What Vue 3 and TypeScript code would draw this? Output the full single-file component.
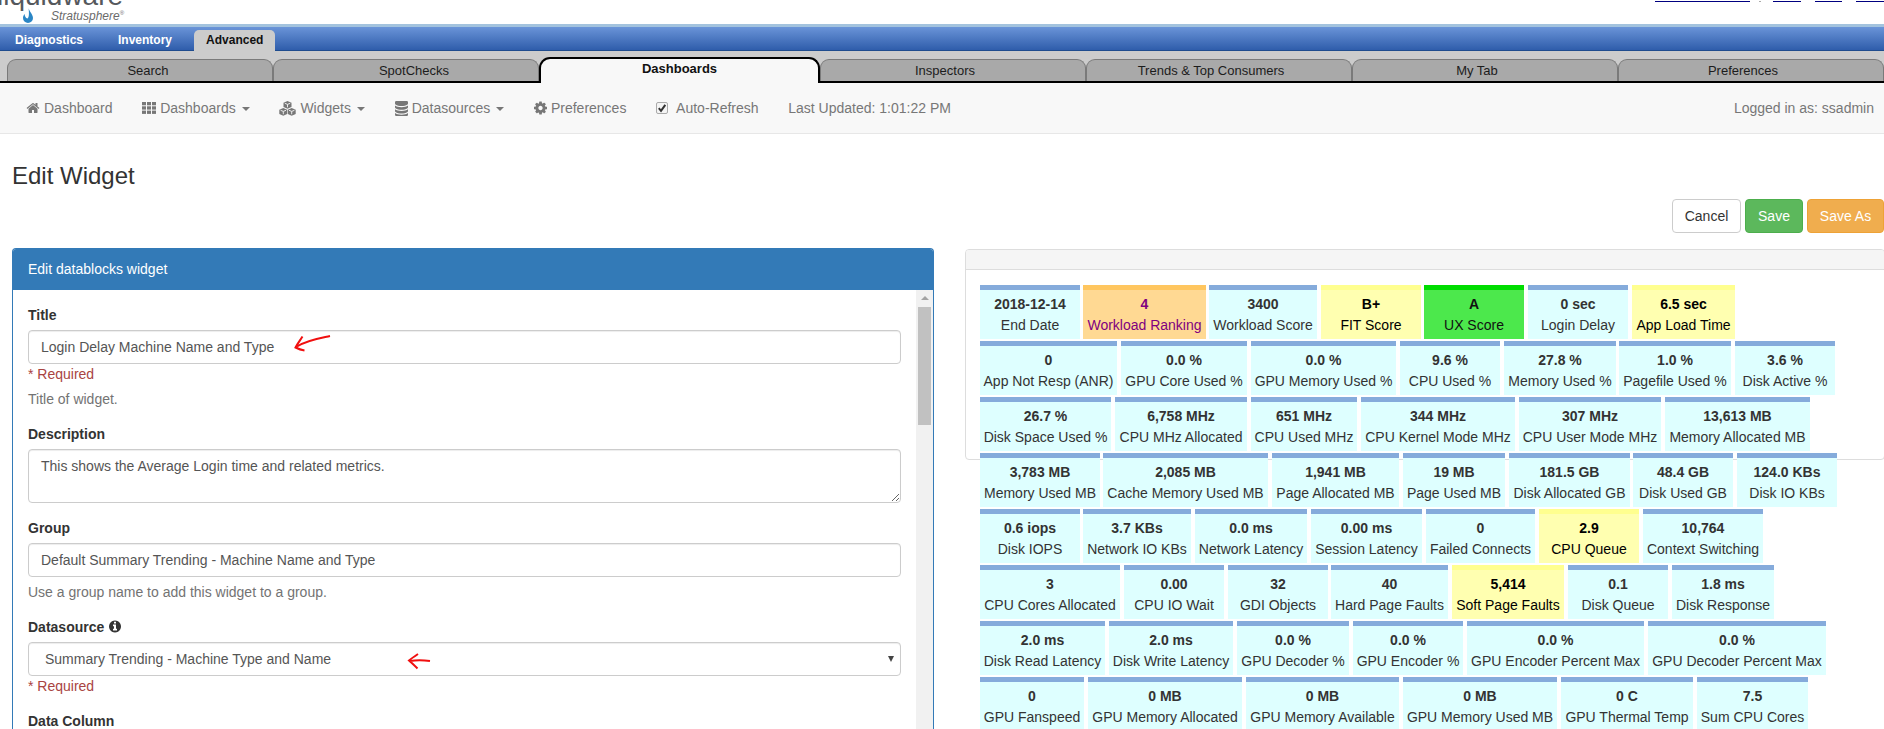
<script setup lang="ts">
type Kind = 'normal' | 'orange' | 'yellow' | 'green'
type Raw = [string, string, number, number, Kind?]

const raw: Raw[][] = [
  [
    ['2018-12-14', 'End Date', 980, 1080],
    ['4', 'Workload Ranking', 1083, 1206, 'orange'],
    ['3400', 'Workload Score', 1209, 1317],
    ['B+', 'FIT Score', 1321, 1421, 'yellow'],
    ['A', 'UX Score', 1424, 1524, 'green'],
    ['0 sec', 'Login Delay', 1528, 1628],
    ['6.5 sec', 'App Load Time', 1632, 1735, 'yellow'],
  ],
  [
    ['0', 'App Not Resp (ANR)', 980, 1117],
    ['0.0 %', 'GPU Core Used %', 1121, 1247],
    ['0.0 %', 'GPU Memory Used %', 1251, 1396],
    ['9.6 %', 'CPU Used %', 1400, 1500],
    ['27.8 %', 'Memory Used %', 1504, 1616],
    ['1.0 %', 'Pagefile Used %', 1619, 1731],
    ['3.6 %', 'Disk Active %', 1735, 1835],
  ],
  [
    ['26.7 %', 'Disk Space Used %', 980, 1111],
    ['6,758 MHz', 'CPU MHz Allocated', 1115, 1247],
    ['651 MHz', 'CPU Used MHz', 1251, 1357],
    ['344 MHz', 'CPU Kernel Mode MHz', 1361, 1515],
    ['307 MHz', 'CPU User Mode MHz', 1519, 1661],
    ['13,613 MB', 'Memory Allocated MB', 1665, 1810],
  ],
  [
    ['3,783 MB', 'Memory Used MB', 980, 1100],
    ['2,085 MB', 'Cache Memory Used MB', 1103, 1268],
    ['1,941 MB', 'Page Allocated MB', 1272, 1399],
    ['19 MB', 'Page Used MB', 1403, 1505],
    ['181.5 GB', 'Disk Allocated GB', 1509, 1630],
    ['48.4 GB', 'Disk Used GB', 1633, 1733],
    ['124.0 KBs', 'Disk IO KBs', 1737, 1837],
  ],
  [
    ['0.6 iops', 'Disk IOPS', 980, 1080],
    ['3.7 KBs', 'Network IO KBs', 1083, 1191],
    ['0.0 ms', 'Network Latency', 1195, 1307],
    ['0.00 ms', 'Session Latency', 1311, 1422],
    ['0', 'Failed Connects', 1426, 1535],
    ['2.9', 'CPU Queue', 1539, 1639, 'yellow'],
    ['10,764', 'Context Switching', 1643, 1763],
  ],
  [
    ['3', 'CPU Cores Allocated', 980, 1120],
    ['0.00', 'CPU IO Wait', 1124, 1224],
    ['32', 'GDI Objects', 1228, 1328],
    ['40', 'Hard Page Faults', 1331, 1448],
    ['5,414', 'Soft Page Faults', 1452, 1564, 'yellow'],
    ['0.1', 'Disk Queue', 1568, 1668],
    ['1.8 ms', 'Disk Response', 1672, 1774],
  ],
  [
    ['2.0 ms', 'Disk Read Latency', 980, 1105],
    ['2.0 ms', 'Disk Write Latency', 1109, 1233],
    ['0.0 %', 'GPU Decoder %', 1237, 1349],
    ['0.0 %', 'GPU Encoder %', 1353, 1463],
    ['0.0 %', 'GPU Encoder Percent Max', 1467, 1644],
    ['0.0 %', 'GPU Decoder Percent Max', 1648, 1826],
  ],
  [
    ['0', 'GPU Fanspeed', 980, 1084],
    ['0 MB', 'GPU Memory Allocated', 1088, 1242],
    ['0 MB', 'GPU Memory Available', 1246, 1399],
    ['0 MB', 'GPU Memory Used MB', 1403, 1557],
    ['0 C', 'GPU Thermal Temp', 1561, 1693],
    ['7.5', 'Sum CPU Cores', 1697, 1808],
  ],
]

const rows = raw.map((row) => {
  let prev = 980
  return row.map(([value, label, start, end, kind]) => {
    const tile = {
      value,
      label,
      kind: kind ?? 'normal',
      box: { width: `${end - start}px`, marginLeft: `${start - prev}px` },
    }
    prev = end
    return tile
  })
})

const mainTabs = ['Search', 'SpotChecks', 'Dashboards', 'Inspectors', 'Trends & Top Consumers', 'My Tab', 'Preferences']
const activeTab = 2
</script>

<template>
  <div class="page">
    <header class="top">
      <div class="logo">
        <div class="word">liquidware</div>
        <svg class="drop" width="14" height="18" viewBox="0 0 14 18">
          <path d="M7.500 1C7.500 5 12 8 12 12a5 5 0 0 1-10 0c0-2 .8-3 1.600-4 .2 2 .8 4 3 4.600C8.500 11 8 6 7.500 1z" fill="#2b86c5" />
        </svg>
        <div class="brand">Stratusphere<sup>®</sup></div>
      </div>
      <div class="links">
        <span class="ul ul-a"></span>
        <span class="tick"></span>
        <span class="ul ul-b"></span>
        <span class="ul ul-c"></span>
        <span class="ul ul-d"></span>
      </div>
    </header>

    <nav class="blue">
      <span class="blue-item">Diagnostics</span>
      <span class="blue-item">Inventory</span>
      <span class="blue-item on">Advanced</span>
    </nav>

    <div class="tabs">
      <div
        v-for="(t, i) in mainTabs"
        :key="t"
        class="tab"
        :class="{ active: i === activeTab, before: i < activeTab, after: i > activeTab }"
      >{{ t }}</div>
    </div>

    <div class="toolbar">
      <span class="tool">
        <svg class="ico" width="14" height="14" viewBox="0 0 1792 1792"><path d="M1472 992v480q0 26-19 45t-45 19h-384v-384h-256v384h-384q-26 0-45-19t-19-45v-480q0-1 .5-3t.5-3l575-474 575 474q1 2 1 6zm223-69l-62 74q-8 9-21 11h-3q-13 0-21-7l-692-577-692 577q-12 8-24 7-13-2-21-11l-62-74q-8-10-7-23.500t11-21.500l719-599q32-26 76-26t76 26l244 204v-195q0-14 9-23t23-9h192q14 0 23 9t9 23v408l219 182q10 8 11 21.500t-7 23.500z" /></svg>
        Dashboard
      </span>
      <span class="tool">
        <svg class="ico" width="14" height="12" viewBox="0 0 14 12">
          <rect x="0" y="0" width="4" height="3.300" /><rect x="5" y="0" width="4" height="3.300" /><rect x="10" y="0" width="4" height="3.300" />
          <rect x="0" y="4.300" width="4" height="3.300" /><rect x="5" y="4.300" width="4" height="3.300" /><rect x="10" y="4.300" width="4" height="3.300" />
          <rect x="0" y="8.600" width="4" height="3.300" /><rect x="5" y="8.600" width="4" height="3.300" /><rect x="10" y="8.600" width="4" height="3.300" />
        </svg>
        Dashboards<i class="caret"></i>
      </span>
      <span class="tool">
        <svg class="ico" width="17" height="15" viewBox="0 0 17 15">
          <path d="M8.500 0 12.500 1.700V6L8.500 7.700 4.500 6V1.700z" />
          <path d="M4.300 7 8.200 8.700V13L4.300 14.800.3 13V8.700z" />
          <path d="M12.700 7 16.700 8.700V13L12.700 14.800 8.800 13V8.700z" />
          <path d="M5.800 2.300 8.500 3.400 11.200 2.300M8.500 3.400V6.300M1.600 9.300 4.300 10.400 7 9.300M4.300 10.400V13.300M10 9.300 12.700 10.400 15.400 9.300M12.700 10.400V13.300" fill="none" stroke="#f8f8f8" stroke-width=".9" />
        </svg>
        Widgets<i class="caret"></i>
      </span>
      <span class="tool">
        <svg class="ico" width="13" height="15" viewBox="128 128 1536 1536" preserveAspectRatio="none"><path d="M896 768q237 0 443-43t325-127v170q0 69-103 128t-280 93.500-385 34.500-385-34.500-280-93.500-103-128v-170q119 84 325 127t443 43zm0 768q237 0 443-43t325-127v170q0 69-103 128t-280 93.500-385 34.500-385-34.500-280-93.500-103-128v-170q119 84 325 127t443 43zm0-384q237 0 443-43t325-127v170q0 69-103 128t-280 93.500-385 34.500-385-34.500-280-93.500-103-128v-170q119 84 325 127t443 43zm0-1152q208 0 385 34.500t280 93.500 103 128v128q0 69-103 128t-280 93.500-385 34.500-385-34.500-280-93.500-103-128v-128q0-69 103-128t280-93.500 385-34.500z" /></svg>
        Datasources<i class="caret"></i>
      </span>
      <span class="tool">
        <svg class="ico" width="13" height="14" viewBox="128 128 1536 1536"><path d="M1152 896q0-106-75-181t-181-75-181 75-75 181 75 181 181 75 181-75 75-181zm512-109v222q0 12-8 23t-20 13l-185 28q-19 54-39 91 35 50 107 138 10 12 10 25t-9 23q-27 37-99 108t-94 71q-12 0-26-9l-138-108q-44 23-91 38-16 136-29 186-7 28-36 28h-222q-14 0-24.500-8.500t-11.500-21.500l-28-184q-49-16-90-37l-141 107q-10 9-25 9-14 0-25-11-126-114-165-168-7-10-7-23 0-12 8-23 15-21 51-66.500t54-70.500q-27-50-41-99l-183-27q-13-2-21-12.500t-8-23.500v-222q0-12 8-23t19-13l186-28q14-46 39-92-40-57-107-138-10-12-10-24 0-10 9-23 26-36 98.500-107.500t94.500-71.500q13 0 26 10l138 107q44-23 91-38 16-136 29-186 7-28 36-28h222q14 0 24.500 8.500t11.500 21.500l28 184q49 16 90 37l142-107q9-9 24-9 13 0 25 10 129 119 165 170 7 8 7 22 0 12-8 23-15 21-51 66.500t-54 70.500q26 50 41 98l183 28q13 2 21 12.500t8 23.500z" /></svg>
        Preferences
      </span>
      <span class="tool">
        <span class="box">
          <svg width="10" height="10" viewBox="0 0 10 10"><path d="M1.800 5.200 4 7.800 8.300 1.800" fill="none" stroke="#333" stroke-width="2" /></svg>
        </span>
        Auto-Refresh
      </span>
      <span class="tool">Last Updated: 1:01:22 PM</span>
      <span class="who">Logged in as: ssadmin</span>
    </div>

    <main class="main">
      <h3 class="title">Edit Widget</h3>
      <div class="actions">
        <button class="btn cancel" type="button">Cancel</button>
        <button class="btn save" type="button">Save</button>
        <button class="btn saveas" type="button">Save As</button>
      </div>

      <div class="columns">
        <section class="edit">
          <div class="edit-head">Edit datablocks widget</div>
          <div class="edit-body">
            <form class="form">
              <div class="group">
                <label class="label">Title</label>
                <div class="annotated">
                  <input class="control" type="text" readonly value="Login Delay Machine Name and Type" />
                  <svg class="arrow arrow-one" width="40" height="18" viewBox="0 0 40 18"><path d="M37 1C28 3 14 5 4 11.500M9.500 1.500C7 5.500 4.500 8.500 2.500 12.500 5.500 14 8.500 15 11.500 15.500" fill="none" stroke="#f00f0f" stroke-width="2" /></svg>
                </div>
                <div class="req">* Required</div>
                <div class="help">Title of widget.</div>
              </div>
              <div class="group">
                <label class="label">Description</label>
                <textarea class="control area" readonly>This shows the Average Login time and related metrics.</textarea>
              </div>
              <div class="group">
                <label class="label">Group</label>
                <input class="control" type="text" readonly value="Default Summary Trending - Machine Name and Type" />
                <div class="help">Use a group name to add this widget to a group.</div>
              </div>
              <div class="group">
                <label class="label">Datasource
                  <svg class="info" width="12" height="13" viewBox="128 128 1536 1536"><path d="M1152 1376v-160q0-14-9-23t-23-9h-96v-512q0-14-9-23t-23-9h-320q-14 0-23 9t-9 23v160q0 14 9 23t23 9h96v320h-96q-14 0-23 9t-9 23v160q0 14 9 23t23 9h448q14 0 23-9t9-23zm-128-896v-160q0-14-9-23t-23-9h-192q-14 0-23 9t-9 23v160q0 14 9 23t23 9h192q14 0 23-9t9-23zm640 416q0 209-103 385.500t-279.500 279.500-385.500 103-385.500-103-279.500-279.500-103-385.500 103-385.500 279.500-279.500 385.500-103 385.500 103 279.500 279.500 103 385.500z" /></svg>
                </label>
                <div class="annotated select-wrap">
                  <select class="control pick">
                    <option>Summary Trending - Machine Type and Name</option>
                  </select>
                  <svg class="arrow arrow-two" width="24" height="18" viewBox="0 0 24 18"><path d="M23 9C16 8 9 8 3 9M11 2C8 4 5 6 2 8.500 5 11 8 14 10.500 16.500" fill="none" stroke="#f00f0f" stroke-width="2" /></svg>
                </div>
                <div class="req">* Required</div>
              </div>
              <div class="group">
                <label class="label">Data Column</label>
              </div>
            </form>
            <div class="track">
              <i class="up"></i>
              <div class="thumb"></div>
            </div>
          </div>
        </section>

        <section class="preview">
          <div class="preview-head"></div>
          <div class="preview-body">
            <div v-for="(row, r) in rows" :key="r" class="tile-row">
              <div v-for="t in row" :key="t.label" class="tile" :class="t.kind" :style="t.box">
                <div class="val">{{ t.value }}</div>
                <div class="lab">{{ t.label }}</div>
              </div>
            </div>
          </div>
        </section>
      </div>
    </main>
  </div>
</template>

<style>
html,
body {
  margin: 0;
  overflow: hidden;
  background: #fff;
}
</style>

<style scoped>
.page {
  width: 1884px;
  height: 729px;
  overflow: hidden;
  font-family: "Liberation Sans", Arial, sans-serif;
  font-size: 14px;
  line-height: 20px;
  color: #333;
  background: #fff;
}

/* cropped logo strip */
.top {
  height: 24px;
  overflow: hidden;
  position: relative;
  display: flex;
  justify-content: flex-end;
}
.logo {
  position: absolute;
  left: 0;
  top: 0;
  width: 130px;
  height: 24px;
}
.word {
  margin: -20px 0 0 -3px;
  font-size: 28px;
  line-height: 32px;
  color: #55585c;
  white-space: nowrap;
}
.drop {
  position: absolute;
  left: 21px;
  top: 6px;
}
.brand {
  position: absolute;
  left: 51px;
  top: 8px;
  font-size: 12px;
  line-height: 16px;
  font-style: italic;
  color: #6a6a6a;
  white-space: nowrap;
}
.brand sup {
  font-size: 6px;
  line-height: 0;
  font-style: normal;
}
.links {
  display: flex;
  align-items: flex-start;
  padding-top: 1px;
}
.ul {
  display: block;
  height: 1px;
  background: #000080;
}
.ul-a { width: 95px; }
.ul-b { width: 28px; margin-left: 12px; }
.ul-c { width: 27px; margin-left: 14px; }
.ul-d { width: 28px; margin-left: 14px; }
.tick {
  display: block;
  width: 2px;
  height: 1px;
  margin-left: 9px;
  background: #aaa;
}

/* blue product nav */
.blue {
  height: 27px;
  box-sizing: border-box;
  border-top: 3px solid #a3c3de;
  border-bottom: 1px solid #1f4c8e;
  background: linear-gradient(#6a94d8, #2f5dab);
  display: flex;
  align-items: flex-end;
  gap: 11px;
  padding-left: 3px;
}
.blue-item {
  height: 21px;
  margin-bottom: -1px;
  padding: 0 12px;
  font-size: 12px;
  font-weight: bold;
  line-height: 20px;
  color: #fff;
}
.blue-item.on {
  margin-left: -1px;
  background: #ccc;
  border-radius: 5px 5px 0 0;
  color: #111;
}

/* section tabs */
.tabs {
  height: 32px;
  box-sizing: border-box;
  padding: 8px 0 0 7px;
  background: #ccc;
  border-bottom: 2px solid #000;
  display: flex;
}
.tab {
  flex: 1 1 0;
  height: 22px;
  box-sizing: border-box;
  border: 1px solid #7a7a7a;
  border-bottom: 0;
  border-radius: 9px 9px 0 0;
  background: #a9a9a9;
  font-size: 13px;
  line-height: 21px;
  text-align: center;
  color: #1c1c1c;
}
.tab.before {
  padding-left: 16px;
}
.tab.after {
  padding-right: 16px;
}
.tab.active {
  flex: 0 0 281px;
  height: 26px;
  margin-top: -2px;
  border: 2px solid #000;
  border-bottom: 0;
  border-radius: 11px 11px 0 0;
  background: #f8f8f8;
  font-weight: bold;
  line-height: 20px;
  color: #111;
}

/* toolbar */
.toolbar {
  height: 51px;
  box-sizing: border-box;
  padding: 0 10px 0 26px;
  background: #f8f8f8;
  border-bottom: 1px solid #e7e7e7;
  display: flex;
  align-items: center;
  gap: 29.7px;
  color: #777;
}
.tool {
  display: flex;
  align-items: center;
  white-space: nowrap;
}
.ico {
  margin-right: 4px;
  fill: #777;
}
.caret {
  width: 0;
  height: 0;
  margin-left: 6px;
  margin-top: 2px;
  border-top: 4px solid #777;
  border-left: 4px solid transparent;
  border-right: 4px solid transparent;
}
.box {
  width: 12px;
  height: 12px;
  margin-right: 8px;
  box-sizing: border-box;
  border: 1px solid #aaa;
  border-radius: 2px;
  background: #f4f4f4;
  display: flex;
  align-items: center;
  justify-content: center;
}
.who {
  margin-left: auto;
}

/* content */
.main {
  padding-left: 12px;
}
.title {
  margin: 0;
  padding-top: 29px;
  font-size: 24px;
  font-weight: normal;
  line-height: 26px;
  color: #333;
}
.actions {
  margin-top: 10px;
  display: flex;
  justify-content: flex-end;
  gap: 4px;
}
.btn {
  height: 34px;
  box-sizing: border-box;
  padding: 0;
  border: 1px solid transparent;
  border-radius: 4px;
  font-family: inherit;
  font-size: 14px;
  white-space: nowrap;
  color: #fff;
}
.cancel {
  width: 69px;
  background: #fff;
  border-color: #ccc;
  color: #333;
}
.save {
  width: 58px;
  background: #5cb85c;
  border-color: #4cae4c;
}
.saveas {
  width: 77px;
  background: #f0ad4e;
  border-color: #eea236;
}
.columns {
  margin-top: 15px;
  display: grid;
  grid-template-columns: 922px 920px;
  gap: 31px;
  align-items: start;
}

/* edit panel */
.edit {
  height: 481px;
  box-sizing: border-box;
  border: 1px solid #337ab7;
  border-bottom: 0;
  border-radius: 4px 4px 0 0;
  background: #fff;
  display: flex;
  flex-direction: column;
  overflow: hidden;
}
.edit-head {
  flex: none;
  height: 41px;
  padding-left: 15px;
  background: #337ab7;
  line-height: 40px;
  color: #fff;
}
.edit-body {
  flex: 1;
  min-height: 0;
  display: flex;
}
.form {
  flex: 1;
  min-width: 0;
  padding: 15px 15px 0;
}
.group {
  margin-bottom: 15px;
}
.label {
  display: block;
  margin-bottom: 5px;
  font-weight: bold;
}
.info {
  fill: #333;
  vertical-align: -1px;
  margin-left: 1px;
}
.annotated {
  position: relative;
}
.control {
  display: block;
  width: 100%;
  height: 34px;
  box-sizing: border-box;
  padding: 6px 12px;
  border: 1px solid #ccc;
  border-radius: 4px;
  background: #fff;
  box-shadow: inset 0 1px 1px rgba(0, 0, 0, 0.075);
  font-family: inherit;
  font-size: 14px;
  line-height: 20px;
  color: #555;
  outline: none;
}
.area {
  height: 54px;
  resize: vertical;
}
.pick {
  appearance: none;
  padding-left: 16px;
}
.select-wrap::after {
  content: "";
  position: absolute;
  right: 7px;
  top: 14px;
  border-top: 6px solid #444;
  border-left: 3px solid transparent;
  border-right: 3px solid transparent;
}
.arrow {
  position: absolute;
  pointer-events: none;
}
.arrow-one {
  left: 265px;
  top: 5px;
}
.arrow-two {
  left: 379px;
  top: 10px;
}
.req {
  color: #a94442;
}
.help {
  margin-top: 5px;
  color: #737373;
}
.track {
  flex: none;
  width: 17px;
  box-sizing: border-box;
  padding: 0 2px;
  background: #f1f1f1;
  display: flex;
  flex-direction: column;
  align-items: center;
}
.up {
  margin-top: 6px;
  border-bottom: 4px solid #a3a3a3;
  border-left: 4px solid transparent;
  border-right: 4px solid transparent;
}
.thumb {
  margin-top: 7px;
  width: 100%;
  height: 118px;
  background: #c1c1c1;
}

/* preview panel */
.preview {
  height: 211px;
  margin-top: 1px;
  box-sizing: border-box;
  border: 1px solid #ddd;
  border-radius: 4px;
  background: #fff;
}
.preview-head {
  height: 20px;
  box-sizing: border-box;
  border-bottom: 1px solid #ddd;
  background: #f5f5f5;
  border-radius: 3px 3px 0 0;
}
.preview-body {
  padding: 15px 14px 0;
}
.tile-row {
  display: flex;
  margin-bottom: 2px;
}
.tile {
  flex: none;
  height: 54px;
  box-sizing: border-box;
  padding-top: 4px;
  border-top: 5px solid #85abdb;
  background: #deffff;
  text-align: center;
  white-space: nowrap;
  color: #333;
}
.val {
  font-weight: bold;
  line-height: 20px;
}
.lab {
  margin-top: 1px;
  line-height: 21px;
}
.tile.orange {
  border-top-color: #ffc65f;
  background: #ffd993;
  color: #800080;
}
.tile.yellow {
  border-top-color: #ffff8f;
  background: #ffffb0;
  color: #000;
}
.tile.green {
  border-top-color: #00dd00;
  background: #4ce84c;
  color: #111;
}
</style>
